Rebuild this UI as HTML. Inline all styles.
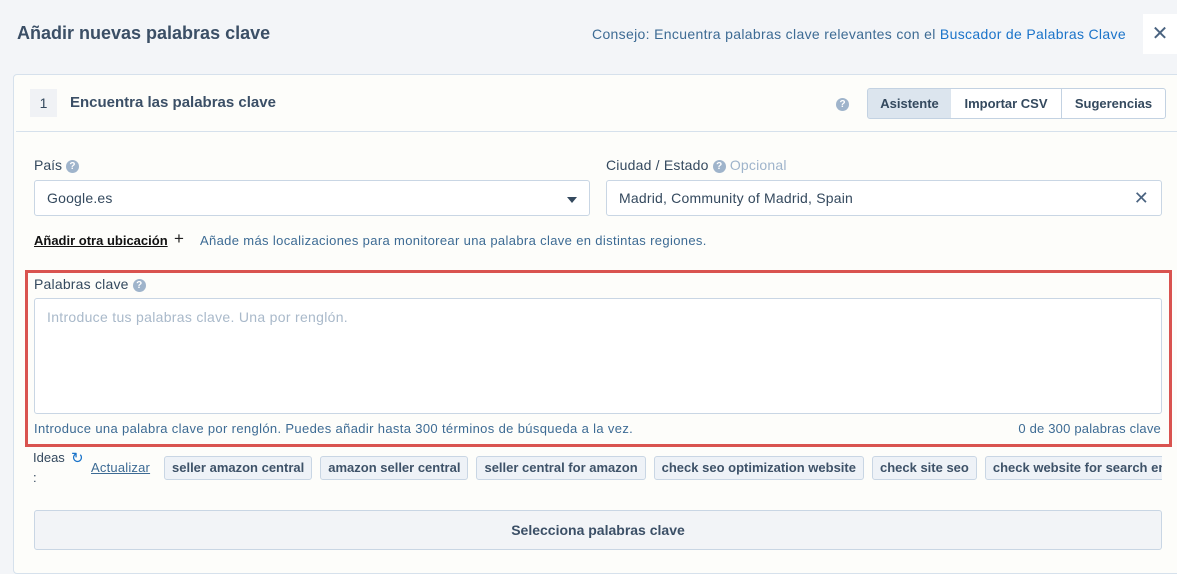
<!DOCTYPE html>
<html><head><meta charset="utf-8"><style>
*{box-sizing:border-box;margin:0;padding:0}
body{width:1177px;height:566px;overflow:hidden;background:#f3f5f8;font-family:"Liberation Sans",Arial,sans-serif;color:#34495e;position:relative}
.a{position:absolute}
.q{display:inline-block;width:13px;height:13px;border-radius:50%;background:#9fb4cb;color:#fff;font-size:10px;font-weight:bold;text-align:center;line-height:13px;vertical-align:1px}
.inp{position:absolute;background:#fff;border:1px solid #c9d6e4;border-radius:3px;height:36px;font-size:14px;line-height:34px;padding-left:12px;color:#34495e;letter-spacing:0.2px}
.tag{display:inline-block;background:#eef2f7;border:1px solid #c9d6e4;border-radius:3px;height:24px;line-height:22px;padding:0 7px;font-size:13px;font-weight:bold;color:#3e5268;margin-right:8px;white-space:nowrap}
.btn{position:absolute;top:88px;height:31px;border:1px solid #c3d2e2;background:#fff;font-size:13px;font-weight:bold;line-height:29px;text-align:center;color:#34495e}
</style></head><body>
<div class="a" style="left:17px;top:23px;font-size:18px;font-weight:bold;color:#3b4f66">Añadir nuevas palabras clave</div>
<div class="a" style="left:592px;top:26px;font-size:14px;letter-spacing:0.33px;color:#3d6b94">Consejo: Encuentra palabras clave relevantes con el <span style="color:#1a73c9">Buscador de Palabras Clave</span></div>
<div class="a" style="left:1143px;top:14px;width:34px;height:40px;background:#fff;font-size:20px;color:#4a6380;text-align:center;line-height:40px">✕</div>

<div class="a" style="left:13px;top:74px;width:1180px;height:500px;background:#fdfdfa;border:1px solid #d6e1ec;border-radius:4px"></div>
<div class="a" style="left:30px;top:89px;width:27px;height:28px;background:#f0f2f5;font-size:14px;line-height:28px;text-align:center">1</div>
<div class="a" style="left:70px;top:94px;font-size:15px;font-weight:bold;color:#3b4f66">Encuentra las palabras clave</div>
<div class="a" style="left:16px;top:131px;width:1161px;height:1px;background:#d6e1ec"></div>
<div class="a" style="left:836px;top:95px"><span class="q">?</span></div>
<div class="btn" style="left:867px;width:85px;background:#dce5ee;border-radius:3px 0 0 3px">Asistente</div>
<div class="btn" style="left:951px;width:111px;border-left:none">Importar CSV</div>
<div class="btn" style="left:1061px;width:105px;border-radius:0 3px 3px 0">Sugerencias</div>

<div class="a" style="left:34px;top:157px;font-size:14px">País <span class="q">?</span></div>
<div class="inp" style="left:34px;top:180px;width:556px">Google.es<span class="a" style="right:12px;top:16px;border:5px solid transparent;border-top:6px solid #34495e;border-bottom:0"></span></div>
<div class="a" style="left:606px;top:157px;font-size:14px;letter-spacing:0.2px">Ciudad / Estado <span class="q">?</span> <span style="color:#9fb4cb">Opcional</span></div>
<div class="inp" style="left:606px;top:180px;width:556px">Madrid, Community of Madrid, Spain<span class="a" style="right:12px;top:0;font-size:18px;color:#4a6380">✕</span></div>

<div class="a" style="left:34px;top:233px;font-size:13px;font-weight:bold;color:#111;text-decoration:underline">Añadir otra ubicación</div>
<div class="a" style="left:174px;top:229px;font-size:17px;color:#222">+</div>
<div class="a" style="left:200px;top:233px;font-size:13px;letter-spacing:0.35px;color:#3d6b94">Añade más localizaciones para monitorear una palabra clave en distintas regiones.</div>

<div class="a" style="left:25px;top:270px;width:1147px;height:177px;border:3px solid #d9534f"></div>
<div class="a" style="left:34px;top:276px;font-size:14px;letter-spacing:0.2px">Palabras clave <span class="q">?</span></div>
<div class="a" style="left:34px;top:298px;width:1128px;height:116px;background:#fff;border:1px solid #c9d6e4;border-radius:3px;padding:10px 12px;font-size:14px;letter-spacing:0.3px;color:#a9b9ca">Introduce tus palabras clave. Una por renglón.</div>
<div class="a" style="left:34px;top:421px;font-size:13px;letter-spacing:0.35px;color:#3d6b94">Introduce una palabra clave por renglón. Puedes añadir hasta 300 términos de búsqueda a la vez.</div>
<div class="a" style="right:16px;top:421px;font-size:13px;letter-spacing:0.2px;color:#3d6b94">0 de 300 palabras clave</div>

<div class="a" style="left:33px;top:448px;font-size:13px;line-height:20px">Ideas<br>:</div>
<div class="a" style="left:71px;top:449px;font-size:15px;color:#1a73c9">↻</div>
<div class="a" style="left:91px;top:460px;font-size:13px;letter-spacing:0.2px;color:#3d6b94;text-decoration:underline">Actualizar</div>
<div class="a" style="left:164px;top:456px;width:998px;overflow:hidden;white-space:nowrap"><span class="tag">seller amazon central</span><span class="tag">amazon seller central</span><span class="tag">seller central for amazon</span><span class="tag">check seo optimization website</span><span class="tag">check site seo</span><span class="tag">check website for search engine</span></div>

<div class="a" style="left:34px;top:510px;width:1128px;height:40px;background:#f2f4f7;border:1px solid #c9d6e4;border-radius:3px;text-align:center;line-height:38px;font-size:14px;font-weight:bold;color:#3b4f66">Selecciona palabras clave</div>
</body></html>
